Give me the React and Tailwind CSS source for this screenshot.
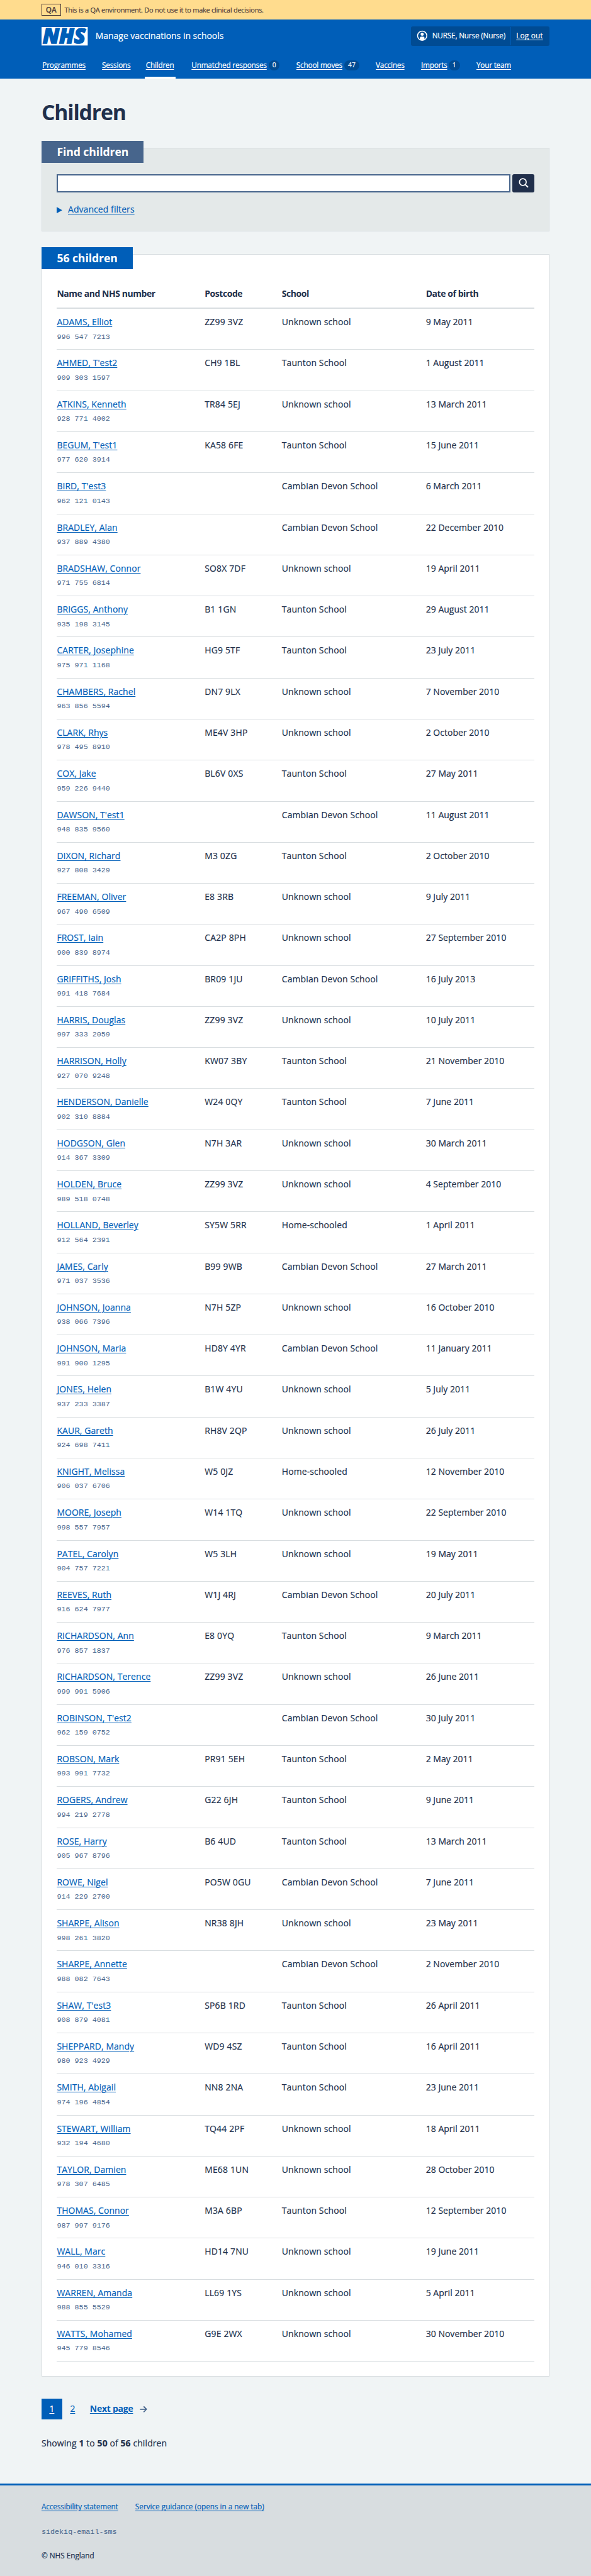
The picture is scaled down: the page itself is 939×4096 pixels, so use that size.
import React from "react";

const UNKNOWN = "Unknown school";
const TAUNTON = "Taunton School";
const CAMBIAN = "Cambian Devon School";
const HOME = "Home-schooled";

const children = [
  ["ADAMS, Elliot", "996 547 7213", "ZZ99 3VZ", UNKNOWN, "9 May 2011"],
  ["AHMED, T'est2", "909 303 1597", "CH9 1BL", TAUNTON, "1 August 2011"],
  ["ATKINS, Kenneth", "928 771 4002", "TR84 5EJ", UNKNOWN, "13 March 2011"],
  ["BEGUM, T'est1", "977 620 3914", "KA58 6FE", TAUNTON, "15 June 2011"],
  ["BIRD, T'est3", "962 121 0143", "", CAMBIAN, "6 March 2011"],
  ["BRADLEY, Alan", "937 889 4380", "", CAMBIAN, "22 December 2010"],
  ["BRADSHAW, Connor", "971 755 6814", "SO8X 7DF", UNKNOWN, "19 April 2011"],
  ["BRIGGS, Anthony", "935 198 3145", "B1 1GN", TAUNTON, "29 August 2011"],
  ["CARTER, Josephine", "975 971 1168", "HG9 5TF", TAUNTON, "23 July 2011"],
  ["CHAMBERS, Rachel", "963 856 5594", "DN7 9LX", UNKNOWN, "7 November 2010"],
  ["CLARK, Rhys", "978 495 8910", "ME4V 3HP", UNKNOWN, "2 October 2010"],
  ["COX, Jake", "959 226 9440", "BL6V 0XS", TAUNTON, "27 May 2011"],
  ["DAWSON, T'est1", "948 835 9560", "", CAMBIAN, "11 August 2011"],
  ["DIXON, Richard", "927 808 3429", "M3 0ZG", TAUNTON, "2 October 2010"],
  ["FREEMAN, Oliver", "967 490 6509", "E8 3RB", UNKNOWN, "9 July 2011"],
  ["FROST, Iain", "900 839 8974", "CA2P 8PH", UNKNOWN, "27 September 2010"],
  ["GRIFFITHS, Josh", "991 418 7684", "BR09 1JU", CAMBIAN, "16 July 2013"],
  ["HARRIS, Douglas", "997 333 2059", "ZZ99 3VZ", UNKNOWN, "10 July 2011"],
  ["HARRISON, Holly", "927 070 9248", "KW07 3BY", TAUNTON, "21 November 2010"],
  ["HENDERSON, Danielle", "902 310 8884", "W24 0QY", TAUNTON, "7 June 2011"],
  ["HODGSON, Glen", "914 367 3309", "N7H 3AR", UNKNOWN, "30 March 2011"],
  ["HOLDEN, Bruce", "989 518 0748", "ZZ99 3VZ", UNKNOWN, "4 September 2010"],
  ["HOLLAND, Beverley", "912 564 2391", "SY5W 5RR", HOME, "1 April 2011"],
  ["JAMES, Carly", "971 037 3536", "B99 9WB", CAMBIAN, "27 March 2011"],
  ["JOHNSON, Joanna", "938 066 7396", "N7H 5ZP", UNKNOWN, "16 October 2010"],
  ["JOHNSON, Maria", "991 900 1295", "HD8Y 4YR", CAMBIAN, "11 January 2011"],
  ["JONES, Helen", "937 233 3387", "B1W 4YU", UNKNOWN, "5 July 2011"],
  ["KAUR, Gareth", "924 698 7411", "RH8V 2QP", UNKNOWN, "26 July 2011"],
  ["KNIGHT, Melissa", "906 037 6706", "W5 0JZ", HOME, "12 November 2010"],
  ["MOORE, Joseph", "998 557 7957", "W14 1TQ", UNKNOWN, "22 September 2010"],
  ["PATEL, Carolyn", "904 757 7221", "W5 3LH", UNKNOWN, "19 May 2011"],
  ["REEVES, Ruth", "916 624 7977", "W1J 4RJ", CAMBIAN, "20 July 2011"],
  ["RICHARDSON, Ann", "976 857 1837", "E8 0YQ", TAUNTON, "9 March 2011"],
  ["RICHARDSON, Terence", "999 991 5906", "ZZ99 3VZ", UNKNOWN, "26 June 2011"],
  ["ROBINSON, T'est2", "962 159 0752", "", CAMBIAN, "30 July 2011"],
  ["ROBSON, Mark", "993 991 7732", "PR91 5EH", TAUNTON, "2 May 2011"],
  ["ROGERS, Andrew", "994 219 2778", "G22 6JH", TAUNTON, "9 June 2011"],
  ["ROSE, Harry", "905 967 8796", "B6 4UD", TAUNTON, "13 March 2011"],
  ["ROWE, Nigel", "914 229 2700", "PO5W 0GU", CAMBIAN, "7 June 2011"],
  ["SHARPE, Alison", "998 261 3820", "NR38 8JH", UNKNOWN, "23 May 2011"],
  ["SHARPE, Annette", "988 082 7643", "", CAMBIAN, "2 November 2010"],
  ["SHAW, T'est3", "908 879 4081", "SP6B 1RD", TAUNTON, "26 April 2011"],
  ["SHEPPARD, Mandy", "980 923 4929", "WD9 4SZ", TAUNTON, "16 April 2011"],
  ["SMITH, Abigail", "974 196 4854", "NN8 2NA", TAUNTON, "23 June 2011"],
  ["STEWART, William", "932 194 4680", "TQ44 2PF", UNKNOWN, "18 April 2011"],
  ["TAYLOR, Damien", "978 307 6485", "ME68 1UN", UNKNOWN, "28 October 2010"],
  ["THOMAS, Connor", "987 997 9176", "M3A 6BP", TAUNTON, "12 September 2010"],
  ["WALL, Marc", "946 010 3316", "HD14 7NU", UNKNOWN, "19 June 2011"],
  ["WARREN, Amanda", "988 855 5529", "LL69 1YS", UNKNOWN, "5 April 2011"],
  ["WATTS, Mohamed", "945 779 8546", "G9E 2WX", UNKNOWN, "30 November 2010"],
];

const navItems = [
  { label: "Programmes", width: "w-[93px]" },
  { label: "Sessions", width: "w-[59px]" },
  { label: "Children", width: "w-[63px]", current: true },
  { label: "Unmatched responses", width: "w-[163px]", count: "0", badge: "w-6" },
  { label: "School moves", width: "w-[100px]", count: "47", badge: "w-8" },
  { label: "Vaccines", width: "w-[62px]" },
  { label: "Imports", width: "w-[56px]", count: "1", badge: "w-6" },
  { label: "Your team", width: "w-[77px]" },
];

const link = "underline decoration-1 underline-offset-[3px]";

function Banner() {
  return (
    <div className="h-[42px] bg-[#ffdc8e] text-[#4d3a3a]">
      <div className="mx-auto flex h-full w-[1100px] items-center">
        <strong className="flex h-[26px] w-[42px] items-center justify-center border border-[#4d3a3a] text-[16px] font-semibold">
          QA
        </strong>
        <span className="ml-2 mt-px text-[15px] tracking-[-0.0245em] whitespace-nowrap">
          This is a QA environment. Do not use it to make clinical decisions.
        </span>
      </div>
    </div>
  );
}

function NhsLogo() {
  return (
    <svg viewBox="0 0 100 40" className="h-10 w-[100px] overflow-visible">
      <rect width="100" height="40" fill="#fff" />
      <text
        x="2.6"
        y="35.8"
        fontFamily="'Open Sans', sans-serif"
        fontWeight="800"
        fontStyle="italic"
        fontSize="44.5"
        fill="#005eb8"
        stroke="#005eb8"
        strokeWidth="2.2"
        textLength="92.5"
        lengthAdjust="spacingAndGlyphs"
      >
        NHS
      </text>
    </svg>
  );
}

function Header() {
  return (
    <header className="h-32 bg-[#005eb8] text-white">
      <div className="mx-auto w-[1100px]">
        <div className="flex h-[72px] items-center">
          <NhsLogo />
          <span className="ml-[17px] text-[19px] leading-7 whitespace-nowrap">
            Manage vaccinations in schools
          </span>
          <div className="ml-auto flex h-[42px] w-[300px] items-center rounded bg-[#004b93]">
            <svg viewBox="0 0 24 24" className="ml-[13px] h-6 w-6">
              <circle cx="12" cy="12" r="10" fill="none" stroke="#fff" strokeWidth="2" />
              <circle cx="12" cy="9" r="3.4" fill="#fff" />
              <path d="M7 20v-3.2a3 3 0 0 1 3-3h4a3 3 0 0 1 3 3V20a10 10 0 0 1-10 0Z" fill="#fff" />
            </svg>
            <span className="ml-[9px] w-[161px] text-[16px] tracking-[-0.0146em] whitespace-nowrap">
              NURSE, Nurse (Nurse)
            </span>
            <span className="ml-[8px] h-10 w-px bg-[#005eb8]" />
            <a className={`ml-[12px] text-[16px] tracking-[0.018em] whitespace-nowrap ${link}`}>
              Log out
            </a>
          </div>
        </div>
        <nav className="flex h-14 gap-9 pl-[2px]">
          {navItems.map((item) => (
            <div key={item.label} className="flex h-14 flex-col">
              <div className="flex h-[52px] items-center pt-[4px]">
                <a
                  className={`${item.width} ${link} text-[16px] leading-6 tracking-[-0.0165em] whitespace-nowrap`}
                >
                  {item.label}
                </a>
                {item.count && (
                  <span
                    className={`${item.badge} ml-1 flex h-[22px] items-center justify-center rounded-full bg-[#004b93] text-[14px]`}
                  >
                    {item.count}
                  </span>
                )}
              </div>
              {item.current && <div className="-mx-[2px] h-1 bg-white" />}
            </div>
          ))}
        </nav>
      </div>
    </header>
  );
}

function Card({ title, tab, body, children: content }) {
  return (
    <section className={`border border-[#d8dde0] ${body}`}>
      <h2
        className={`${tab} -mt-4 -ml-px flex h-12 items-center pl-[33px] text-[24px] font-bold tracking-[-0.004em] whitespace-nowrap text-white [-webkit-text-stroke:0]`}
      >
        {title}
      </h2>
      {content}
    </section>
  );
}

function SearchCard() {
  return (
    <Card title="Find children" tab="w-[221px] bg-[#47658c]" body="mt-[42px] h-[182px] bg-[#e4e9e9]">
      <div className="mt-6 ml-8 flex gap-1">
        <div className="h-10 w-[982px] border-[3px] border-[#47658c] bg-white" />
        <div className="h-10 w-12 rounded bg-[#202f4b]">
          <svg viewBox="0 0 48 40" className="h-10 w-12">
            <circle cx="22.8" cy="17" r="7.3" fill="none" stroke="#fff" strokeWidth="2.4" />
            <path d="M28 22.3 34 28.3" stroke="#fff" strokeWidth="2.8" />
          </svg>
        </div>
      </div>
      <div className="mt-[22.5px] ml-8 flex h-7 items-center text-[#005eb8]">
        <svg viewBox="0 0 12 14" className="mt-[3px] h-[14px] w-3">
          <path d="M0 0 12 7 0 14Z" fill="currentColor" />
        </svg>
        <span className={`ml-3 text-[19px] leading-7 tracking-[0.007em] ${link}`}>
          Advanced filters
        </span>
      </div>
    </Card>
  );
}

function ResultsCard() {
  const columns = "grid grid-cols-[320px_167px_312px_235px]";
  return (
    <Card title="56 children" tab="w-[197px] bg-[#005eb8]" body="mt-12 h-[4600px] bg-white">
      <div className="mx-8 text-[19px] leading-7">
        <div
          className={`${columns} h-[86px] border-b-[3px] border-[#d8dde0] pt-[39px] font-bold tracking-[-0.029em] [-webkit-text-stroke:0]`}
        >
          <span>Name and NHS number</span>
          <span>Postcode</span>
          <span>School</span>
          <span>Date of birth</span>
        </div>
        {children.map(([name, number, postcode, school, dob]) => (
          <div key={number} className={`${columns} h-[88.97px] border-b border-[#d8dde0] pt-[15px]`}>
            <div>
              <a className={`block text-[#005eb8] ${link} tracking-[0.006em]`}>{name}</a>
              <span className="mt-1 block font-['Liberation_Mono',monospace] text-[16px] leading-7 text-[#47658c] [-webkit-text-stroke:0]">
                {number}
              </span>
            </div>
            <span className="tracking-[0.013em]">{postcode}</span>
            <span className="tracking-[0.01em]">{school}</span>
            <span className="tracking-[0.004em]">{dob}</span>
          </div>
        ))}
      </div>
    </Card>
  );
}

function Pagination() {
  return (
    <>
      <nav className="mt-12 flex h-[45px] items-center text-[19px] leading-7 text-[#005eb8]">
        <a className={`flex h-[45px] w-[45px] items-center justify-center bg-[#005eb8] text-white ${link}`}>
          1
        </a>
        <a className={`ml-[17px] ${link}`}>2</a>
        <a
          className={`ml-[32px] w-[94px] font-bold tracking-[-0.0164em] whitespace-nowrap [-webkit-text-stroke:0] ${link}`}
        >
          Next page
        </a>
        <svg viewBox="0 0 16 16" className="ml-[14px] h-4 w-4">
          <path
            d="M0.5 8H14M8.5 2 14.5 8l-6 6"
            fill="none"
            stroke="#47658c"
            strokeWidth="2.4"
          />
        </svg>
      </nav>
      <p className="mt-[38px] text-[19px] leading-7 tracking-[0.008em]">
        Showing <b className="font-bold">1</b> to <b className="font-bold">50</b> of{" "}
        <b className="font-bold">56</b> children
      </p>
    </>
  );
}

function Footer() {
  return (
    <footer className="flex-1 bg-[#d8dde0]">
      <div className="h-1 bg-[#005eb8]" />
      <div className="mx-auto w-[1100px] pt-[34px] text-[16px] leading-6">
        <div className="flex text-[#005eb8]">
          <a className={`w-[203px] tracking-[-0.0101em] whitespace-nowrap ${link}`}>
            Accessibility statement
          </a>
          <a className={`whitespace-nowrap ${link}`}>Service guidance (opens in a new tab)</a>
        </div>
        <p className="mt-8 font-['Liberation_Mono',monospace] text-[#47658c] [-webkit-text-stroke:0]">
          sidekiq-email-sms
        </p>
        <p className="mt-[26px]">© NHS England</p>
      </div>
    </footer>
  );
}

export default function App() {
  return (
    <div className="flex h-[5582px] w-full flex-col overflow-hidden bg-[#f0f4f5] font-['Open_Sans',sans-serif] text-[#202f4b] [-webkit-text-stroke:0.25px] [zoom:0.7338]">
      <Banner />
      <Header />
      <main className="mx-auto h-[5212px] w-[1100px]">
        <h1 className="mt-[40px] h-[68px] text-[46px] leading-[68px] font-bold tracking-[-0.034em] [-webkit-text-stroke:0]">
          Children
        </h1>
        <SearchCard />
        <ResultsCard />
        <Pagination />
      </main>
      <Footer />
    </div>
  );
}
